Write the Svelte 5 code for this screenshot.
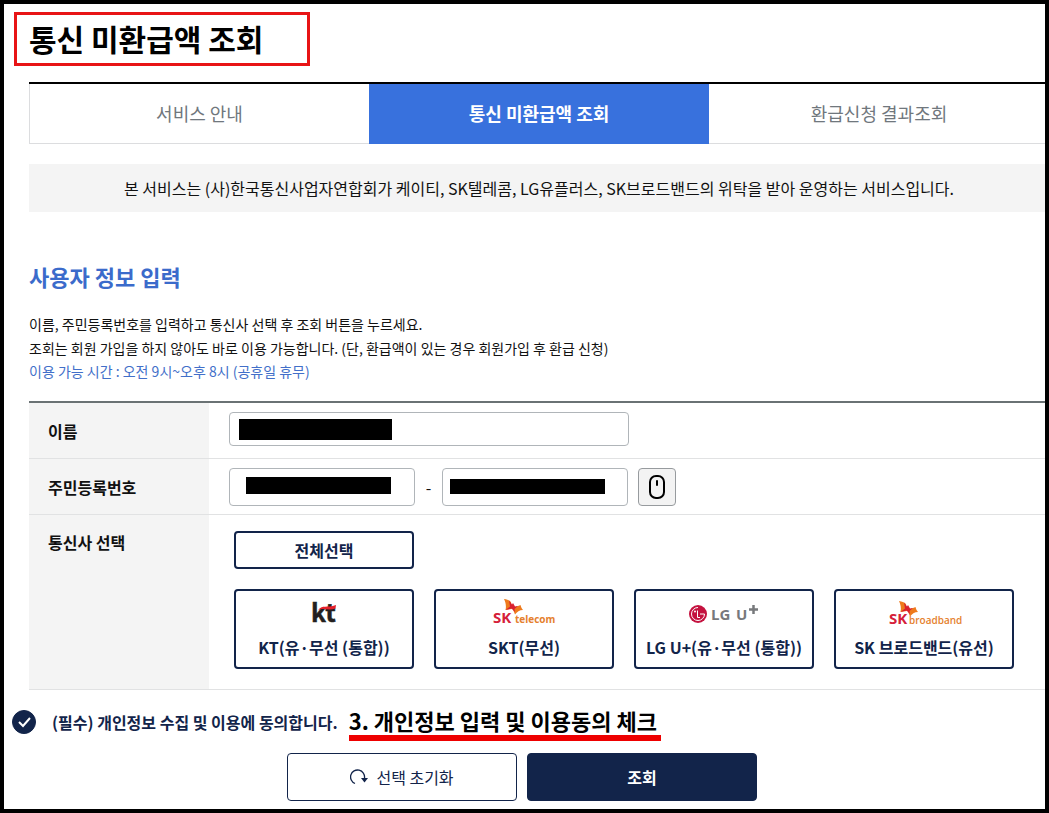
<script lang="ts">
  type Carrier = { id: string; label: string };

  const tabs = ['서비스 안내', '통신 미환급액 조회', '환급신청 결과조회'];

  const carriers: Carrier[] = [
    { id: 'kt', label: 'KT(유·무선 (통합))' },
    { id: 'skt', label: 'SKT(무선)' },
    { id: 'lgu', label: 'LG U+(유·무선 (통합))' },
    { id: 'skb', label: 'SK 브로드밴드(유선)' }
  ];

  let activeTab = $state(1);
  let selected: string[] = $state([]);
  let agreed = $state(true);

  function toggleCarrier(id: string) {
    selected = selected.includes(id) ? selected.filter((c) => c !== id) : [...selected, id];
  }

  function selectAll() {
    selected = carriers.map((c) => c.id);
  }

  function reset() {
    selected = [];
  }
</script>

{#snippet skWings()}
  <path d="M0 0 C3 0.500 5 1 7 3 L8 10 L1.500 11 C2.500 7 1.500 3 0 0Z" fill="#ee7a1c" />
  <path d="M8 8 C11 8.500 14 7 16.500 6 C17 8 18 10 19 11 C15.500 11 13 13 11 15.500Z" fill="#ee7a1c" />
  <path d="M5 1.500 L8 5.500 L9 4 L11 7.500 L14 7 L10.500 10 L11 13 L7.500 9.500 L1.500 11 L6 7.500Z" fill="#d9202f" />
{/snippet}

{#snippet logo(id: string)}
  {#if id === 'kt'}
    <svg class="logo" width="28" height="28" viewBox="0 0 28 28" aria-hidden="true">
      <text x="1" y="23" class="kt-text">kt</text>
      <path d="M8 11.500 C12 5 17 9.500 26 6 L25.500 9.500 C18 12 13 8 8 11.500Z" fill="#e5202b" />
    </svg>
  {:else if id === 'skt'}
    <svg class="logo" width="64" height="28" viewBox="0 0 64 28" aria-hidden="true">
      <text x="1" y="24" class="sk-text">SK</text>
      <g transform="translate(12 0)">{@render skWings()}</g>
      <text x="23" y="24" class="sk-sub heavy">telecom</text>
    </svg>
  {:else if id === 'lgu'}
    <svg class="logo" width="72" height="28" viewBox="0 0 72 28" aria-hidden="true">
      <circle cx="10" cy="15" r="9" fill="#c4123f" />
      <path d="M10 8.500 A6.500 6.500 0 1 0 16.500 15 H12" fill="none" stroke="#fff" />
      <path d="M9.500 11.500 V18.500 H12" fill="none" stroke="#fff" />
      <circle cx="7" cy="12.500" r="1" fill="#fff" />
      <text x="23" y="21" class="lg-text">LG</text>
      <text x="48" y="21" class="lg-text">U</text>
      <path d="M65.500 6 V15 M61 10.500 H70" stroke="#77797c" stroke-width="2.500" />
    </svg>
  {:else}
    <svg class="logo" width="72" height="28" viewBox="0 0 72 28" aria-hidden="true">
      <text x="1" y="25" class="sk-text">SK</text>
      <g transform="translate(11 2)">{@render skWings()}</g>
      <text x="21" y="25" class="sk-sub">broadband</text>
    </svg>
  {/if}
{/snippet}

<main class="frame">
  <h1>통신 미환급액 조회</h1>

  <div class="content">
    <nav class="tabs">
      {#each tabs as tab, i}
        <button type="button" class:active={activeTab === i} onclick={() => (activeTab = i)}>
          {tab}
        </button>
      {/each}
    </nav>

    <p class="notice">
      본 서비스는 (사)한국통신사업자연합회가 케이티, SK텔레콤, LG유플러스, SK브로드밴드의 위탁을 받아 운영하는 서비스입니다.
    </p>

    <h2>사용자 정보 입력</h2>
    <p class="guide">
      이름, 주민등록번호를 입력하고 통신사 선택 후 조회 버튼을 누르세요.<br />
      조회는 회원 가입을 하지 않아도 바로 이용 가능합니다. (단, 환급액이 있는 경우 회원가입 후 환급 신청)
    </p>
    <p class="hours">이용 가능 시간 : 오전 9시~오후 8시 (공휴일 휴무)</p>

    <table>
      <tbody>
        <tr>
          <th scope="row"><label for="name">이름</label></th>
          <td><input id="name" class="field name" type="text" /></td>
        </tr>
        <tr>
          <th scope="row"><label for="rrn-front">주민등록번호</label></th>
          <td>
            <div class="rrn">
              <input id="rrn-front" class="field front" type="text" />
              <span class="dash">-</span>
              <input class="field back" type="password" aria-label="주민등록번호 뒷자리" />
              <button type="button" class="mouse" aria-label="마우스 입력">
                <svg width="18" height="24" viewBox="0 0 18 24" fill="none" stroke="#000" stroke-width="2">
                  <rect x="2" y="1" width="14" height="22" rx="6" />
                  <path d="M9 6 V10" stroke-linecap="round" />
                </svg>
              </button>
            </div>
          </td>
        </tr>
        <tr>
          <th scope="row" class="top">통신사 선택</th>
          <td class="carriers">
            <button type="button" class="pick" onclick={selectAll}>전체선택</button>
            <div class="carrier-list">
              {#each carriers as carrier}
                <button
                  type="button"
                  class="pick carrier"
                  aria-pressed={selected.includes(carrier.id)}
                  onclick={() => toggleCarrier(carrier.id)}
                >
                  {@render logo(carrier.id)}
                  <span>{carrier.label}</span>
                </button>
              {/each}
            </div>
          </td>
        </tr>
      </tbody>
    </table>
  </div>

  <div class="consent">
    <label>
      <input type="checkbox" bind:checked={agreed} />
      (필수) 개인정보 수집 및 이용에 동의합니다.
    </label>
    <strong class="callout">3. 개인정보 입력 및 이용동의 체크</strong>
  </div>

  <div class="actions">
    <button type="button" class="reset" onclick={reset}>
      <svg width="18" height="16" viewBox="0 0 18 16" fill="none" stroke="#12244a" aria-hidden="true">
        <path d="M5 14.500 A7 7 0 1 1 14.500 9" stroke-width="1.300" />
        <path d="M11 9 H18 L14.500 13.500Z" fill="#12244a" stroke="none" />
      </svg>
      선택 초기화
    </button>
    <button type="submit" class="submit">조회</button>
  </div>
</main>

<style>
  :global(body) {
    margin: 0;
  }

  .frame {
    box-sizing: border-box;
    min-height: 100vh;
    padding: 8px 0;
    overflow: hidden;
    border: 4px solid #000;
    background: #fff;
    color: #111;
    font-family: 'Noto Sans CJK KR', 'Noto Sans', sans-serif;
    font-size: 16px;
  }

  button,
  input {
    box-sizing: border-box;
    font: inherit;
  }

  button {
    cursor: pointer;
  }

  h1 {
    box-sizing: border-box;
    width: 296px;
    margin: 0 0 16px 10px;
    padding: 0 0 2px 12px;
    border: 3px solid #e81416;
    font-size: 30px;
    line-height: 46px;
    color: #000;
  }

  /* the service column runs under the right edge of the frame */
  .content {
    margin: 0 -4px 0 25px;
  }

  .tabs {
    display: grid;
    grid-template-columns: repeat(3, 1fr);
    border-top: 2px solid #000;
  }

  .tabs button {
    height: 60px;
    padding: 0 0 2px;
    border: solid #dcdddf;
    border-width: 0 0 1px;
    background: #fff;
    color: #70777d;
    font-size: 18px;
  }

  .tabs button:first-child {
    border-left-width: 1px;
  }

  .tabs button.active {
    border: 0;
    background: #3871dd;
    color: #fff;
    font-weight: 700;
  }

  .notice {
    margin: 20px 0 0;
    background: #f4f4f4;
    line-height: 48px;
    text-align: center;
  }

  h2 {
    margin: 48px 0 20px;
    color: #3b6bcb;
    font-size: 22px;
    line-height: 32px;
  }

  .guide {
    margin: 0;
    font-size: 14px;
    line-height: 24px;
  }

  .hours {
    margin: 0 0 19px;
    color: #426fc9;
    font-size: 14px;
    line-height: 22px;
  }

  table {
    width: 100%;
    border-top: 2px solid #6a7274;
    border-spacing: 0;
    table-layout: fixed;
  }

  th,
  td {
    border-bottom: 1px solid #e1e2e3;
  }

  th {
    box-sizing: border-box;
    width: 180px;
    padding: 0 0 0 19px;
    background: #f4f4f4;
    text-align: left;
    line-height: 24px;
  }

  th.top {
    padding-top: 15px;
    vertical-align: top;
  }

  td {
    padding: 9px 0 8px 20px;
  }

  .field {
    height: 38px;
    padding: 0 10px;
    border: 1px solid #b0b5b9;
    border-radius: 4px;
    background: #fff no-repeat;
    background-image: linear-gradient(#000, #000);
  }

  .name {
    display: block;
    width: 400px;
    height: 34px;
    margin-bottom: 4px;
    background-position: 9px 6px;
    background-size: 153px 21px;
  }

  .rrn {
    display: flex;
    align-items: center;
  }

  .front,
  .back {
    width: 186px;
  }

  .front {
    background-position: 16px 8px;
    background-size: 145px 17px;
  }

  .back {
    background-position: 7px 10px;
    background-size: 155px 15px;
  }

  .dash {
    width: 27px;
    text-align: center;
  }

  .mouse {
    display: flex;
    align-items: center;
    justify-content: center;
    width: 38px;
    height: 38px;
    margin-left: 10px;
    padding: 0;
    border: 1px solid #979b9e;
    border-radius: 4px;
    background: #f3f3f3;
  }

  .carriers {
    padding: 16px 0 20px 25px;
  }

  .pick {
    display: block;
    width: 180px;
    height: 38px;
    padding: 0;
    border: 2px solid #12244a;
    border-radius: 4px;
    background: #fff;
    color: #12244a;
    font-weight: 700;
    line-height: 24px;
  }

  .carrier-list {
    display: flex;
    flex-wrap: wrap;
    gap: 20px;
    margin-top: 20px;
  }

  .carrier {
    display: flex;
    flex-direction: column;
    align-items: center;
    justify-content: center;
    gap: 8px;
    height: 80px;
  }

  .logo {
    overflow: visible;
  }

  .kt-text {
    fill: #231f20;
    stroke: #231f20;
    stroke-width: 0.5;
    font-size: 25px;
  }

  .sk-text {
    fill: #d5203a;
    font: 700 15px 'Open Sans', sans-serif;
  }

  .sk-sub {
    fill: #e5812e;
    font: 600 10px 'Open Sans', sans-serif;
  }

  .sk-sub.heavy {
    font-weight: 700;
  }

  .lg-text {
    fill: #77797c;
    font: 700 15px 'Open Sans', sans-serif;
  }

  .consent {
    display: flex;
    align-items: flex-start;
    gap: 11px;
    margin-top: 19px;
    padding-left: 8px;
    line-height: 26px;
  }

  .consent label {
    display: flex;
    align-items: center;
    gap: 16px;
    color: #12244a;
    font-weight: 700;
  }

  .consent input {
    width: 24px;
    height: 24px;
    margin: 0;
    border: 1px solid #12244a;
    border-radius: 50%;
    appearance: none;
  }

  .consent input:checked {
    background: #12244a
      url("data:image/svg+xml,%3Csvg xmlns='http://www.w3.org/2000/svg' viewBox='0 0 24 24'%3E%3Cpath d='M7 12l4 4 7-8' fill='none' stroke='white' stroke-width='2'/%3E%3C/svg%3E")
      center / 24px no-repeat;
  }

  .callout {
    padding: 0 4px 4px 0;
    border-bottom: 6px solid #ee0000;
    color: #000;
    font-size: 22px;
    line-height: 22px;
  }

  .actions {
    display: flex;
    justify-content: center;
    gap: 10px;
    margin: 12px 5px 0 0;
  }

  .actions button {
    display: flex;
    align-items: center;
    justify-content: center;
    gap: 8px;
    width: 230px;
    height: 48px;
    border: 1px solid #12244a;
    border-radius: 4px;
    background: #fff;
    color: #12244a;
  }

  .actions .submit {
    background: #12244a;
    color: #fff;
    font-weight: 700;
  }
</style>
